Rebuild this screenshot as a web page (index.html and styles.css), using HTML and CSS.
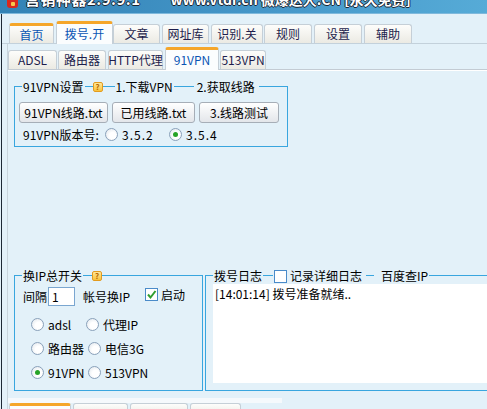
FILE: index.html
```html
<!DOCTYPE html>
<html lang="zh-CN">
<head>
<meta charset="utf-8">
<title>营销神器</title>
<link rel="stylesheet" href="styles.css">
</head>
<body>
<div class="titlebar">
  <span class="appicon"><span class="appmark"></span></span>
  <span class="ttl">营销神器2.9.9.1</span>
  <span class="ttl ttl2">www.vtdr.cn 微爆达人.CN [永久免费]</span>
</div>
<div class="win">
  <div class="maintabs">
    <div class="tab hot w45">首页</div>
    <div class="tab sel w57 mr0">拨号.开</div>
    <div class="tab w47">文章</div>
    <div class="tab w47">网址库</div>
    <div class="tab w52 mr1">识别.关</div>
    <div class="tab w48">规则</div>
    <div class="tab w48">设置</div>
    <div class="tab w48">辅助</div>
  </div>
  <div class="page">
    <div class="subtabs">
      <div class="tab w49 mr1">ADSL</div>
      <div class="tab w48">路由器</div>
      <div class="tab w55">HTTP代理</div>
      <div class="tab sel w54 mr1">91VPN</div>
      <div class="tab w46">513VPN</div>
    </div>
    <div class="subpage">
      <div class="grp g1">
        <div class="ghead">
          <span class="gc-l"></span>
          <span class="gt">91VPN设置</span>
          <span class="gl l8"></span>
          <span class="help">?</span>
          <span class="gl l12"></span>
          <span class="gt">1.下载VPN</span>
          <span class="gl l20"></span>
          <span class="gt gt3">2.获取线路</span>
          <span class="gl fill"></span>
          <span class="gc-r"></span>
        </div>
        <div class="gbox g1b">
          <div class="btnrow">
            <div class="btn b89">91VPN线路.txt</div>
            <div class="btn b83">已用线路.txt</div>
            <div class="btn b80">3.线路测试</div>
          </div>
          <div class="verrow">
            <span class="verlabel">91VPN版本号:</span>
            <span class="opt o64"><span class="radio"></span><span class="num">3.5.2</span></span>
            <span class="opt"><span class="radio on"></span><span class="num">3.5.4</span></span>
          </div>
        </div>
      </div>

      <div class="botrow">
        <div class="grp gleft">
          <div class="ghead">
            <span class="gc-l"></span>
            <span class="gt">换IP总开关</span>
            <span class="gl l9"></span>
            <span class="help">?</span>
            <span class="gl fill"></span>
            <span class="gc-r"></span>
          </div>
          <div class="gbox gleftb">
            <div class="row1">
              <span class="lbl25">间隔</span>
              <span class="inp">1</span>
              <span class="lbl62">帐号换IP</span>
              <span class="chkwrap">
                <span class="chk"><svg width="11" height="11" viewBox="0 0 11 11"><path d="M2 5.5 L4.5 8.5 L9.5 2" fill="none" stroke="#2f9e2f" stroke-width="2"/></svg></span>
                <span>启动</span>
              </span>
            </div>
            <div class="rgroup">
              <div class="rrow">
                <span class="opt o55"><span class="radio"></span><span>adsl</span></span>
                <span class="opt"><span class="radio"></span><span>代理IP</span></span>
              </div>
              <div class="rrow">
                <span class="opt o57"><span class="radio"></span><span>路由器</span></span>
                <span class="opt"><span class="radio"></span><span>电信3G</span></span>
              </div>
              <div class="rrow">
                <span class="opt o57"><span class="radio on"></span><span>91VPN</span></span>
                <span class="opt"><span class="radio"></span><span>513VPN</span></span>
              </div>
            </div>
          </div>
        </div>

        <div class="grp gright">
          <div class="ghead">
            <span class="gc-l"></span>
            <span class="gt">拨号日志</span>
            <span class="gl l10"></span>
            <span class="chk hchk"></span>
            <span class="gt gt3">记录详细日志</span>
            <span class="gl l8 gap"></span>
            <span class="gt gt6">百度查IP</span>
            <span class="gl fill"></span>
            <span class="gc-r"></span>
          </div>
          <div class="gbox grightb">
            <div class="log">[14:01:14] 拨号准备就绪..</div>
          </div>
        </div>
      </div>
    </div>
    <div class="bstrip"></div>
    <div class="btabs">
      <div class="btab bhot w62"></div>
      <div class="btab w55"></div>
      <div class="btab w58"></div>
      <div class="btab w51"></div>
    </div>
  </div>
</div>
</body>
</html>
```
FILE: styles.css
```css
* { box-sizing: border-box; }
html, body { margin: 0; padding: 0; }
body {
  width: 487px;
  height: 409px;
  overflow: hidden;
  background: #e3f1f9;
  font-family: "Noto Sans CJK SC", "Liberation Sans", sans-serif;
  font-size: 12px;
  color: #000;
}

/* title bar */
.titlebar {
  height: 14px;
  display: flex;
  overflow: hidden;
  background: linear-gradient(90deg, #3383b6, #4597c9 55%, #56abd7);
  border-bottom: 1px solid #7fb9dc;
}
.appicon {
  flex: none;
  width: 11px;
  height: 11px;
  margin: -3px 0 0 7px;
  background: #d8281c;
  border-radius: 3px;
  display: flex;
  align-items: center;
  justify-content: center;
}
.appmark {
  width: 4px;
  height: 4px;
  margin-top: 3px;
  background: #f6c64a;
  border-radius: 1px;
}
.ttl {
  margin: -9px 0 0 7px;
  font-size: 15px;
  line-height: 16px;
  font-weight: bold;
  color: #fff;
  white-space: nowrap;
  letter-spacing: 0.5px;
  text-shadow: 1px 0 0 #1b2633, -1px 0 0 #1b2633, 0 1px 0 #1b2633, 0 -1px 0 #1b2633;
}
.ttl2 { margin-left: 30px; font-size: 14px; letter-spacing: 0; }

/* window */
.win {
  margin-left: 1px;
  border-left: 1px solid #1d2834;
  height: 395px;
}

/* tabs */
.maintabs {
  display: flex;
  align-items: flex-end;
  height: 30px;
  padding-left: 7px;
  border-bottom: 1px solid #c3d1db;
}
.tab {
  flex: none;
  height: 19px;
  margin-right: 2px;
  border: 1px solid #c5cfd7;
  border-bottom: none;
  border-radius: 3px 3px 0 0;
  background: linear-gradient(#fdfdfb, #ebeae3);
  color: #1d1d4c;
  display: flex;
  align-items: center;
  justify-content: center;
  line-height: 1;
  white-space: nowrap;
}
.tab.hot {
  height: 20px;
  border-top: 3px solid #f5a62a;
  color: #0a55b4;
}
.tab.sel {
  height: 23px;
  margin-bottom: -1px;
  border-top: 3px solid #f5a62a;
  background: #fbfdfe;
  color: #0a55b4;
}
.mr0 { margin-right: 0; }
.mr1 { margin-right: 1px; }
.w45 { width: 45px; }
.w46 { width: 46px; }
.w47 { width: 47px; }
.w48 { width: 48px; }
.w49 { width: 49px; }
.w51 { width: 51px; }
.w52 { width: 52px; }
.w54 { width: 54px; }
.w55 { width: 55px; }
.w57 { width: 57px; }
.w58 { width: 58px; }
.w62 { width: 62px; }

.page {
  margin-left: 5px;
  border-left: 1px solid #c9d5dd;
  height: 365px;
}
.subtabs {
  display: flex;
  align-items: flex-end;
  height: 26px;
  border-bottom: 1px solid #c3cbd3;
}
.subpage {
  border-top: 1px solid #fff;
  padding: 9px 0 0 6px;
}

/* group boxes */
.ghead {
  display: flex;
  height: 13px;
  line-height: 13px;
  white-space: nowrap;
}
.gc-l {
  flex: none;
  width: 8px;
  height: 7px;
  margin-top: 6px;
  border-top: 1px solid #39a6df;
  border-left: 1px solid #39a6df;
}
.gc-r {
  flex: none;
  width: 2px;
  height: 7px;
  margin-top: 6px;
  border-top: 1px solid #39a6df;
  border-right: 1px solid #39a6df;
}
.gl {
  flex: none;
  height: 1px;
  margin-top: 6px;
  background: #39a6df;
}
.gl.fill { flex: 1; }
.l8 { width: 8px; }
.l9 { width: 9px; }
.l10 { width: 10px; }
.l12 { width: 12px; }
.l20 { width: 20px; }
.gl.gap { margin-right: 6px; }
.gt { padding: 0 1px; }
.gt3 { padding: 0 4px 0 3px; }
.gt6 { padding: 0 1px; }
.help {
  flex: none;
  width: 10px;
  height: 10px;
  margin-top: 2px;
  border: 1px solid #e39b1e;
  border-radius: 2px;
  background: linear-gradient(#ffe79a, #f8c23c);
  color: #b76a00;
  font-size: 8px;
  line-height: 8px;
  font-weight: bold;
  text-align: center;
}
.gbox {
  border: 1px solid #39a6df;
  border-top: none;
}

.g1 { width: 274px; }
.g1b { padding: 9px 0 5px 4px; }
.btnrow { display: flex; gap: 4px; }
.btn {
  flex: none;
  height: 21px;
  border: 1px solid #a6aeb7;
  border-radius: 3px;
  background: linear-gradient(#ffffff, #e3e6ea);
  display: flex;
  align-items: center;
  justify-content: center;
  white-space: nowrap;
}
.b89 { width: 89px; }
.b83 { width: 83px; }
.b80 { width: 80px; }
.verrow {
  display: flex;
  align-items: center;
  height: 14px;
  margin-top: 4px;
  padding-left: 4px;
  white-space: nowrap;
}
.verlabel { width: 82px; flex: none; }
.opt { display: flex; align-items: center; flex: none; white-space: nowrap; }
.o55 { width: 55px; }
.o57 { width: 57px; }
.o64 { width: 64px; }
.num { letter-spacing: 1px; }
.radio {
  flex: none;
  width: 13px;
  height: 13px;
  margin-right: 4px;
  border: 1px solid #8aa1ba;
  border-radius: 50%;
  background: radial-gradient(circle at 60% 60%, #ffffff 35%, #dce3ea);
  display: flex;
  align-items: center;
  justify-content: center;
}
.radio.on::after {
  content: "";
  width: 5px;
  height: 5px;
  border-radius: 50%;
  background: #27a327;
}

.botrow {
  display: flex;
  gap: 2px;
  margin-top: 122px;
}
.gleft { width: 189px; flex: none; }
.gleftb { padding: 5px 0 6px 0; }
.row1 {
  display: flex;
  align-items: center;
  height: 19px;
  padding-left: 8px;
  white-space: nowrap;
}
.lbl25 { width: 25px; flex: none; }
.lbl62 { width: 62px; flex: none; margin-left: 8px; }
.inp {
  flex: none;
  width: 27px;
  height: 19px;
  border: 1px solid #7aa6d0;
  background: #fff;
  padding-left: 3px;
  line-height: 17px;
}
.chkwrap {
  display: flex;
  align-items: center;
  align-self: flex-start;
  height: 14px;
}
.chk {
  flex: none;
  width: 13px;
  height: 13px;
  margin-right: 3px;
  border: 1px solid #4a8bc9;
  background: #fff;
  display: flex;
  align-items: center;
  justify-content: center;
}
.hchk { margin: 1px 0 0 1px; }
.rgroup { margin-top: 6px; }
.rrow {
  display: flex;
  align-items: center;
  height: 24px;
  padding-left: 16px;
}

.gright { width: 290px; flex: none; }
.grightb { padding: 2px 0 7px 7px; }
.log {
  height: 99px;
  background: #fff;
  padding: 2px 2px;
  line-height: 16px;
  white-space: pre;
}

/* bottom strip */
.bstrip {
  margin-top: 7px;
  width: 274px;
  height: 5px;
  background: #f5f9fc;
}
.btabs {
  display: flex;
  padding-left: 1px;
  gap: 2px;
}
.btab {
  flex: none;
  height: 12px;
  border: 1px solid #c5cfd7;
  border-bottom: none;
  border-radius: 3px 3px 0 0;
  background: linear-gradient(#fdfdfb, #ebeae3);
}
.btab.bhot {
  border-top: 3px solid #f5a62a;
  background: #fbfdfe;
}
```
